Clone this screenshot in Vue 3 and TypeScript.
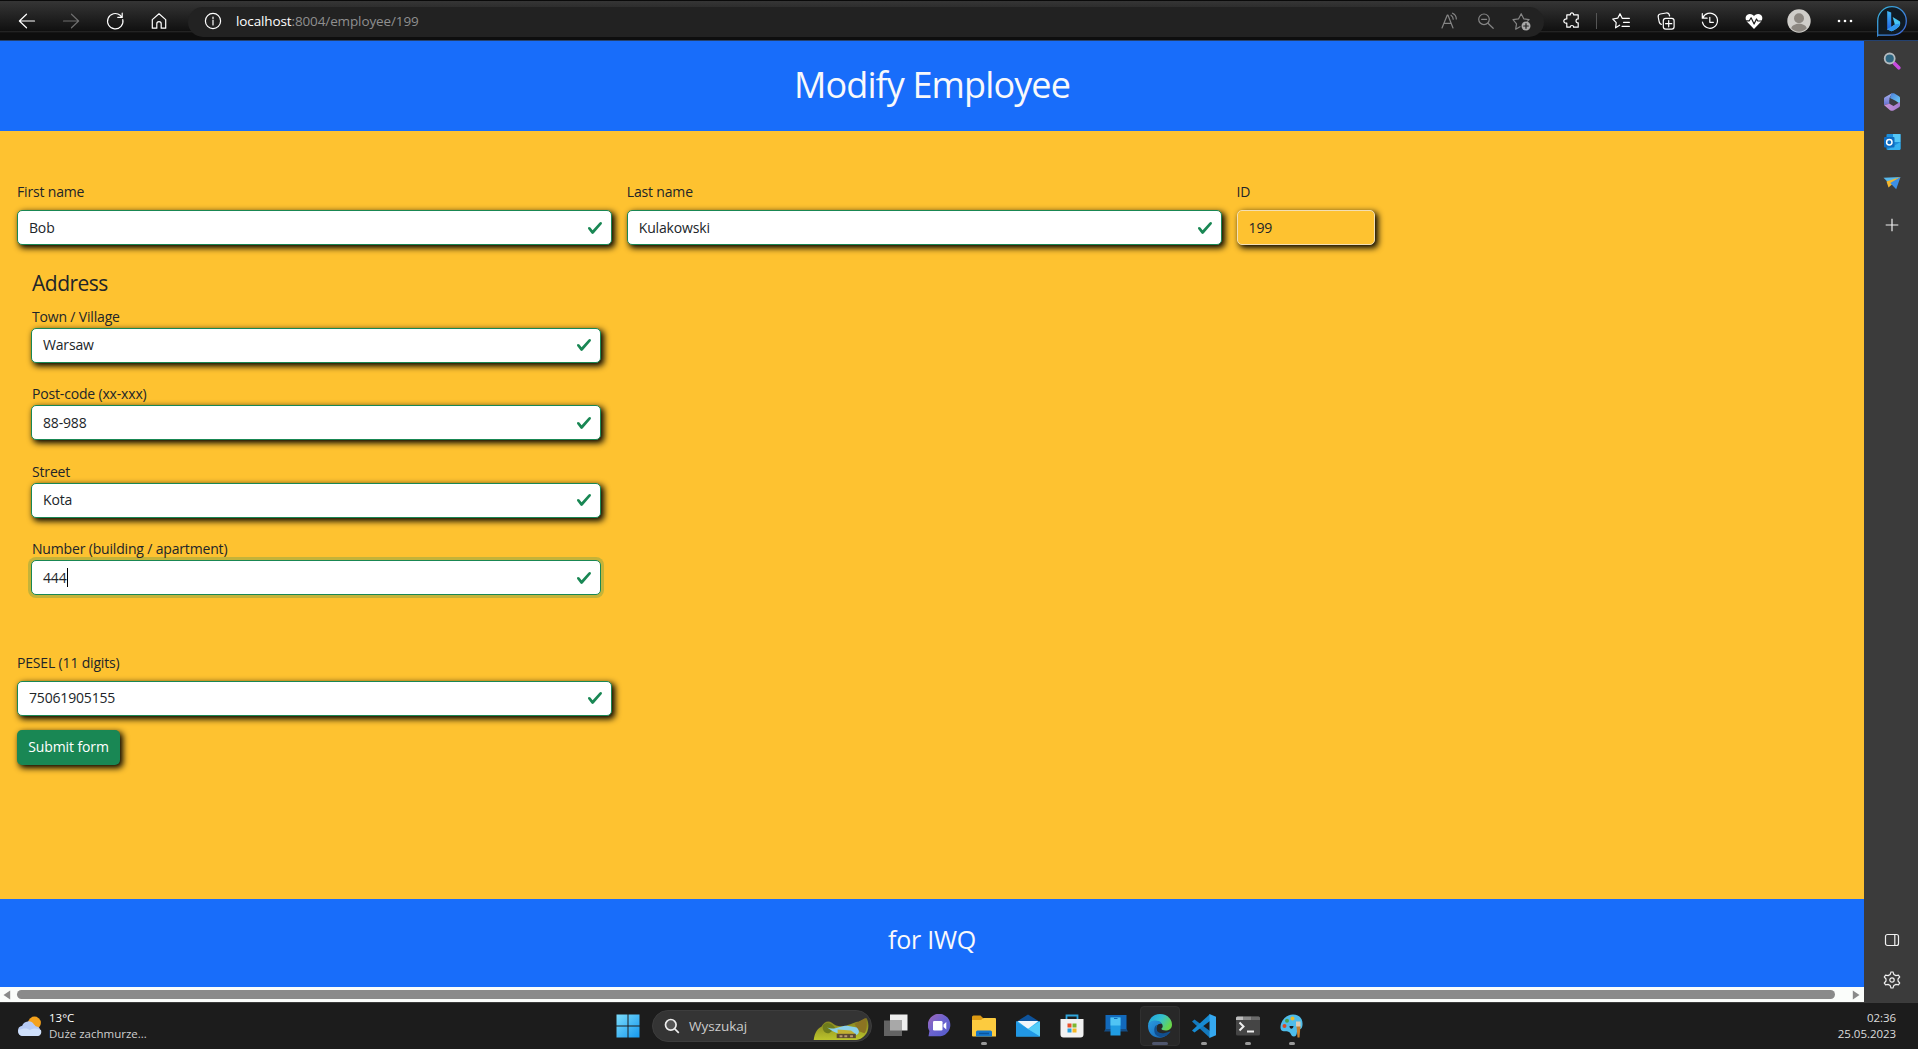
<script setup lang="ts">
interface Field {
  id: string
  label: string
  value: string
  focused?: boolean
}

const names: Field[] = [
  { id: 'first', label: 'First name', value: 'Bob' },
  { id: 'last', label: 'Last name', value: 'Kulakowski' },
]

const address: Field[] = [
  { id: 'town', label: 'Town / Village', value: 'Warsaw' },
  { id: 'post', label: 'Post-code (xx-xxx)', value: '88-988' },
  { id: 'street', label: 'Street', value: 'Kota' },
  { id: 'number', label: 'Number (building / apartment)', value: '444', focused: true },
]
</script>

<template>
  <div class="screen">
    <header class="toolbar">
      <nav class="nav">
        <svg class="ic" viewBox="0 0 20 20"><path d="M17.5 10H2.5M9.5 3.2L2.4 10l7.1 6.8" /></svg>
        <svg class="ic dim" viewBox="0 0 20 20"><path d="M2.5 10h15M10.5 3.2l7.1 6.8-7.1 6.8" /></svg>
        <svg class="ic" viewBox="0 0 20 20"><path d="M17.8 8.6A7.7 7.7 0 1 1 15.2 4.3L16.8 6M17.2 2.2v4.2h-4.4" /></svg>
        <svg class="ic" viewBox="0 0 20 20"><path d="M3.3 8.6L10 2.8l6.7 5.8v8.6h-4.5v-4.400a2.200 2.200 0 0 0-4.400 0v4.400H3.300z" /></svg>
      </nav>
      <div class="omnibox">
        <svg class="ic" viewBox="0 0 20 20"><circle cx="10" cy="10" r="7.6" /><path d="M10 9v5M10 6v1.4" /></svg>
        <span class="url">localhost<em>:8004/employee/199</em></span>
        <div class="omni-tools">
          <svg class="ic grey" viewBox="0 0 20 20"><path d="M2 17L7.3 4h.6L13 17M4 12.4h7.2M11 4.200c1.600 1 2.200 2.400 2.200 4M12.500 2.200c2.600 1.200 3.800 3 3.800 5.800" /></svg>
          <svg class="ic grey" viewBox="0 0 20 20"><circle cx="8" cy="8.3" r="5.3" /><path d="M12 12.3l5.2 5M5.6 8.3h5" /></svg>
          <svg class="ic grey" viewBox="0 0 20 20"><path d="M8 15.700l-4.300 2.500.8-5.400L1 8.700l5.600-.9L9.200 2.700l2.500 5.100 5.400.9-1.500 1.500" /><circle cx="14" cy="15" r="4.500" class="disc" /><path d="M14 12.700v4.600M11.700 15h4.600" class="cut" /></svg>
        </div>
      </div>
      <div class="actions">
        <svg class="ic" viewBox="0 0 20 20"><path d="M4.800 3.800h3.500c-.4-2.600 3.700-2.600 3.300 0h4.600v4.100c-2.900-.5-2.900 4.500 0 4v4.300h-4.600c.4-2.300-3.700-2.300-3.300 0H4.800v-4.200c-4 .8-4-4.500 0-4z" /></svg>
        <i class="bar"></i>
        <svg class="ic" viewBox="0 0 20 20"><path d="M7.600 14.200l-4 2.600.6-5.200L.8 8l4.900-.8L8 2.700l2.200 4.600h7.200M11.500 11.300h5.900M10 15.300h7.400" /></svg>
        <svg class="ic" viewBox="0 0 20 20"><rect x="7.3" y="7.3" width="10.8" height="10.8" rx="2.4" /><path d="M12.700 9.600v6.200M9.600 12.700h6.200M5.300 13.400C4 12.800 3.500 12 3.200 11L2.200 6c-.2-1.600.7-2.700 2-3l6-1c1.800-.2 3 .7 3.400 2.900" /></svg>
        <svg class="ic" viewBox="0 0 20 20"><path d="M2.700 7.200A7.600 7.600 0 1 1 2.400 11M2.300 2.500v4.700h4.800M9.800 6.300v5h3.600" /></svg>
        <svg class="ic" viewBox="0 0 20 20"><path class="fillw" d="M10 18L3 10.700C.2 7.300 2 3 5.800 3 8 3 9.300 4 10 5.200 10.700 4 12 3 14.200 3 18 3 19.800 7.300 17 10.700z" /><path class="pulse" d="M1 9.800h4.300l1.800-3 3 6.200 2.400-5 1.200 2H19" /></svg>
        <svg class="avatar" viewBox="0 0 24 24"><circle cx="12" cy="12" r="11.7" fill="#cfcdc9" /><circle cx="12" cy="9.2" r="5" fill="#8c8781" /><path d="M4.200 19.200c1.400-6 14.200-6 15.600 0-4 4.600-11.600 4.600-15.600 0z" fill="#8c8781" /></svg>
        <svg class="ic" viewBox="0 0 20 20"><g class="fillw"><circle cx="4" cy="10" r="1.3" /><circle cx="10" cy="10" r="1.3" /><circle cx="16" cy="10" r="1.3" /></g></svg>
        <svg class="bing" viewBox="0 0 32 32">
          <defs>
            <linearGradient id="bg1" x1="0" y1="0" x2="1" y2="1"><stop offset="0" stop-color="#39b4d8" /><stop offset="1" stop-color="#3d63d8" /></linearGradient>
            <linearGradient id="bg2" x1="0" y1="0" x2="0" y2="1"><stop offset="0" stop-color="#41b8f5" /><stop offset="1" stop-color="#1f62e6" /></linearGradient>
          </defs>
          <path d="M1.700 30.500V16A14.300 14.300 0 1 1 16 30.200H2z" fill="#101b24" stroke="url(#bg1)" stroke-width="1.3" />
          <path d="M11.200 6l4 1.600v14.200l-4 3.400z" fill="url(#bg2)" />
          <path d="M16.700 12l7.300 4.400c1 4-1 6.400-8.600 9.900l-4.200-1.800 7.600-5z" fill="#48c6f2" />
          <path d="M11.200 24.200l8.400-5 4.200-.8c-.5 3.600-3.800 6-8.400 7.900z" fill="#3096ee" />
        </svg>
      </div>
    </header>

    <div class="middle">
      <main class="page">
        <div class="hero"><h1>Modify Employee</h1></div>
        <form class="form" @submit.prevent>
          <div class="row">
            <div v-for="f in names" :key="f.id" class="field wide">
              <label>{{ f.label }}</label>
              <div class="input"><span>{{ f.value }}</span><svg class="check" viewBox="0 0 8 8"><path d="M2.3 6.73L.6 4.53c-.4-1.04.46-1.4 1.1-.8l1.1 1.4 3.4-3.8c.6-.63 1.6-.27 1.2.7l-4 4.6c-.43.5-.8.4-1.1.1z" /></svg></div>
            </div>
            <div class="field id">
              <label>ID</label>
              <div class="input plain"><span>199</span></div>
            </div>
          </div>
          <section class="address">
            <h4>Address</h4>
            <div v-for="f in address" :key="f.id" class="stack">
              <label>{{ f.label }}</label>
              <div class="input" :class="{ focus: f.focused }"><span>{{ f.value }}</span><i v-if="f.focused" class="caret"></i><svg class="check" viewBox="0 0 8 8"><path d="M2.3 6.73L.6 4.53c-.4-1.04.46-1.4 1.1-.8l1.1 1.4 3.4-3.8c.6-.63 1.6-.27 1.2.7l-4 4.6c-.43.5-.8.4-1.1.1z" /></svg></div>
            </div>
          </section>
          <div class="field wide pesel">
            <label>PESEL (11 digits)</label>
            <div class="input"><span>75061905155</span><svg class="check" viewBox="0 0 8 8"><path d="M2.3 6.73L.6 4.53c-.4-1.04.46-1.4 1.1-.8l1.1 1.4 3.4-3.8c.6-.63 1.6-.27 1.2.7l-4 4.6c-.43.5-.8.4-1.1.1z" /></svg></div>
          </div>
          <button class="submit" type="submit"><span>Submit form</span></button>
        </form>
        <footer class="foot"><h3>for IWQ</h3></footer>
        <div class="scroll">
          <svg class="arrow" viewBox="0 0 8 10"><path d="M7.2.6v8.8L.5 5z" /></svg>
          <div class="thumb"></div>
          <svg class="arrow" viewBox="0 0 8 10"><path d="M.8.6v8.8L7.5 5z" /></svg>
        </div>
      </main>

      <aside class="side">
        <div class="side-top">
          <svg viewBox="0 0 18 18"><path d="M11.5 11.5l4.3 4.3" stroke="#c94be0" stroke-width="3.6" stroke-linecap="round" /><circle cx="6.7" cy="6.5" r="5" fill="#2f6782" stroke="#b5bcc0" stroke-width="1.8" /></svg>
          <svg viewBox="0 0 18 18">
            <defs>
              <linearGradient id="ma" x1="0" y1="0" x2="0" y2="1"><stop offset="0" stop-color="#a9b4f0" /><stop offset="1" stop-color="#6670d0" /></linearGradient>
              <linearGradient id="mb" x1="0" y1="0" x2="1" y2="1"><stop offset="0" stop-color="#4a7fdc" /><stop offset="1" stop-color="#6fd0f5" /></linearGradient>
              <linearGradient id="mc" x1="0" y1="0" x2="1" y2="0"><stop offset="0" stop-color="#c993d6" /><stop offset="1" stop-color="#a27bd0" /></linearGradient>
            </defs>
            <path d="M9 .2L2.200 4C1.300 4.500 1 5 1 6v6l5.500-1.200V5z" fill="url(#ma)" />
            <path d="M8.500.2h2.500L16 3.300c.8.500 1 1 1 1.900v5.500l-4.500-3L7 5z" fill="url(#mb)" />
            <path d="M1 12l5.500-1.200L10.500 13 17 9v3.500c0 .8-.3 1.300-1 1.700l-5 3c-1.300.7-2.700.7-4 0z" fill="url(#mc)" />
            <path d="M6.500 7.200L8 6l4 2.300v2L10 12l-3.500-2z" fill="#3b3b44" />
          </svg>
          <svg viewBox="0 0 18 18"><rect x="3.5" y="1" width="14" height="16" rx="1" fill="#1c8edb" /><path d="M10 1h7.500v8H10z" fill="#55c8f7" /><path d="M4 17l13.500-8v7l-1 1z" fill="#35b1f0" /><rect x="1" y="4" width="10.5" height="10.5" rx="1" fill="#0f6cc0" /><circle cx="6.300" cy="9.200" r="2.700" fill="none" stroke="#fff" stroke-width="1.5" /></svg>
          <svg viewBox="0 0 18 18"><path d="M.5 3.800L17.500 3 5.200 8.600z" fill="#57b9ec" /><path d="M3.500 7.500L17.500 3 5.500 13.500z" fill="#f3b72e" /><path d="M7.200 9L17.500 3l-4.300 12.200z" fill="#3c8fe5" /></svg>
          <svg class="plus" viewBox="0 0 18 18"><path d="M9 2.700v12.600M2.700 9h12.600" /></svg>
        </div>
        <div class="side-bottom">
          <svg class="line" viewBox="0 0 18 18"><rect x="2.5" y="3.5" width="13" height="11" rx="2" /><path d="M11.800 3.500v11" /></svg>
          <svg class="line" viewBox="0 0 18 18"><path d="M7.100 3.500L8 1h2l.9 2.500 2 1.100 2.500-.5 1.300 1.900-1.700 2v2l1.700 2-1.300 1.900-2.500-.5-2 1.100L10 17H8l-.9-2.500-2-1.100-2.500.5L1.300 12 3 10V8L1.300 6l1.300-1.900 2.500.5z" /><circle cx="9" cy="9" r="2.2" /></svg>
        </div>
      </aside>
    </div>

    <footer class="taskbar">
      <div class="weather">
        <svg viewBox="0 0 26 24"><circle cx="17.5" cy="9" r="6.4" fill="#f5a21c" /><path d="M6 22a5.200 5.200 0 0 1-.8-10.300 6.600 6.600 0 0 1 11.800-1.200c1 .8 1.300 1.700 2.600 1.900A5 5 0 0 1 20 22z" fill="#b7cbf5" /><path d="M5 15c4-1 6 0 8 1 3-2 7-2 11 0 1 4-1 6-4 6H6c-4-.3-5-3-4.600-6z" fill="#cfe0fb" /></svg>
        <div class="lines"><b>13°C</b><span>Duże zachmurze...</span></div>
      </div>
      <div class="apps">
        <div class="start"><svg viewBox="0 0 24 24"><defs><linearGradient id="wn" x1="0" y1="0" x2="1" y2="1"><stop offset="0" stop-color="#7bdcfb" /><stop offset="1" stop-color="#1598ef" /></linearGradient></defs><path d="M.5.5h11v11H.5zM12.500.5h11v11h-11zM.5 12.500h11v11H.5zM12.500 12.500h11v11h-11z" fill="url(#wn)" /></svg></div>
        <div class="search">
          <svg class="mag" viewBox="0 0 16 16"><circle cx="6.800" cy="6.800" r="5.300" fill="#555" /><path d="M10.800 10.800l4 4" /></svg>
          <span>Wyszukaj</span>
          <svg class="art" viewBox="0 0 57 24">
            <defs><linearGradient id="hill" x1="0" y1="0" x2="0" y2="1"><stop offset="0" stop-color="#7d7a1e" /><stop offset="1" stop-color="#bcc52c" /></linearGradient></defs>
            <path d="M0 23C1 15 4 11 8 9c3-5 7-7 11-4 4 4 9 4 15 3 7-2 9-4 13-4l8-4c2 3 3 9 1 14-2 5-7 9-14 9z" fill="url(#hill)" />
            <path d="M10 7c5-4 9-1 13 4l-7 5c-5 0-8-4-6-9z" fill="#6e7c1c" />
            <path d="M43 6L54 0c2 5 2 12-1 16l-8-3z" fill="#8c7422" />
            <path d="M14 10c8 3 12-2 21-2l10 2c4 4 2 8-2 8-8 0-6-2-14-2-7 0-9-2-15-6z" fill="#8bd0ea" />
            <path d="M25 12l14 1 5 4H25z" fill="#c2b032" />
            <path d="M24 16.500h20v4.500H24z" fill="#5c4a31" />
            <path d="M27 18h3v2h-3zM32 18h3v2h-3zM38 18h3v2h-3z" fill="#b99a70" />
          </svg>
        </div>
        <div class="app"><svg viewBox="0 0 24 24"><path d="M6 .5h17.500v16H6z" fill="#eee" /><path d="M0 6.500h18v15.500H0z" fill="#636363" /><path d="M6 6.500h12v10H6z" fill="#a8a8a8" /></svg></div>
        <div class="app"><svg viewBox="0 0 24 24"><defs><linearGradient id="ct" x1="0" y1="0" x2="1" y2="1"><stop offset="0" stop-color="#a068b8" /><stop offset=".5" stop-color="#6b63cf" /><stop offset="1" stop-color="#5059c9" /></linearGradient></defs><path d="M.5 22.300l.9-5.300A11.300 11.300 0 1 1 12.500 22.300z" fill="url(#ct)" /><rect x="5" y="7" width="9.5" height="9.5" rx="1.3" fill="#fff" /><path d="M15.500 10.500l2.800-2.500v7.500l-2.800-2.500z" fill="#fff" /></svg></div>
        <div class="app run"><svg viewBox="0 0 24 24"><path d="M0 3a1.500 1.500 0 0 1 1.500-1.500h7L11 4v4H0z" fill="#dd9a13" /><path d="M0 6h9l2.500-2H23a1 1 0 0 1 1 1v17.500H1a1 1 0 0 1-1-1z" fill="#fccb3f" /><path d="M4 22.500V18a1.500 1.500 0 0 1 1.500-1.500h13A1.500 1.500 0 0 1 20 18v4.500z" fill="#1477cb" /><path d="M7 19.500h10" stroke="#0b5499" stroke-width="1.5" /></svg></div>
        <div class="app"><svg viewBox="0 0 24 24"><path d="M0 8l12-7.500L24 8z" fill="#0e539b" /><path d="M0 7.500h24v15H0z" fill="#36b5f1" /><path d="M1.500 7h21L12 15z" fill="#f2f6fb" /><path d="M0 7.500l24 15H1a1 1 0 0 1-1-1z" fill="#2197e4" /><path d="M12 15L24 7.500v14.800z" fill="#55cdf8" /></svg></div>
        <div class="app"><svg viewBox="0 0 24 24"><path d="M6.500 5.500v-4h11v4" fill="none" stroke="#2fa5dc" stroke-width="1.8" /><path d="M.5 5h23v15.500a3 3 0 0 1-3 3h-17a3 3 0 0 1-3-3z" fill="#f1f1f1" /><path d="M7.500 9.500h4v4h-4z" fill="#e8502b" /><path d="M12.500 9.500h4v4h-4z" fill="#7db72f" /><path d="M7.500 14.500h4v4h-4z" fill="#28a0dd" /><path d="M12.500 14.500h4v4h-4z" fill="#f5b723" /></svg></div>
        <div class="app"><svg viewBox="0 0 24 24"><path d="M1.500 1h21v15.500h-21z" fill="#1269bb" /><path d="M0 17.500h24l-1.500-2.500h-21z" fill="#134d85" /><path d="M6.500 3.500h10v18h-10z" fill="#209ce2" /><path d="M6.500 3.500h10v8h-10z" fill="#50c4f4" /><path d="M10 4.500h3.500" stroke="#1269bb" /></svg></div>
        <div class="app active"><svg viewBox="0 0 24 24">
          <defs>
            <linearGradient id="eg" x1="0" y1="0" x2="1" y2=".5"><stop offset="0" stop-color="#1c9fe3" /><stop offset=".55" stop-color="#35c1cd" /><stop offset="1" stop-color="#68d64b" /></linearGradient>
            <linearGradient id="eb" x1="0" y1="0" x2="1" y2="1"><stop offset="0" stop-color="#2a9be0" /><stop offset="1" stop-color="#1462b4" /></linearGradient>
          </defs>
          <path d="M0 11C1 4 6 0 12 0c7 0 12 5 12 10.500 0 4-3 6-6.500 6-2.500 0-4.500-1-4-2 1.500-1 1.500-3 .5-4.500C11 6 3 6 0 11z" fill="url(#eg)" />
          <path d="M0 12c0-3.500 4-6 8-5.500 3 .3 5 1.500 6 3.500-2-1-5 0-5.500 3C7.500 19 13 22 19.500 20.500 15 26 0 25 0 12z" fill="url(#eb)" />
          <path d="M9 11c-3 6 2 11 12.500 6.500.8-.3 1.200.2.700.8C17 25.500 4.500 24.500 6.500 14 7 12 8 11.200 9 11z" fill="#114f8f" />
        </svg></div>
        <div class="app run"><svg viewBox="0 0 24 24"><path d="M0 7.500L2.500 5.500 18 17v7z" fill="#1479bd" /><path d="M0 16.500L2.500 18.500 18 7V0z" fill="#178bd2" /><path d="M17.500 0L24 2.800v18.400L17.500 24z" fill="#35a8f0" /></svg></div>
        <div class="app run"><svg viewBox="0 0 24 24"><rect y="2.5" width="24" height="19" rx="1.5" fill="#454545" /><path d="M0 6V4a1.500 1.500 0 0 1 1.500-1.500H7V6z" fill="#bdbdbd" /><path d="M7 2.500h8.500V6H7z" fill="#8a8a8a" /><path d="M15.500 2.500h7A1.500 1.500 0 0 1 24 4v2h-8.500z" fill="#6b6b6b" /><path d="M3.500 8.500l4 4-4 4M11 17.500h7" fill="none" stroke="#eee" stroke-width="2" /></svg></div>
        <div class="app run"><svg viewBox="0 0 24 24"><path d="M13 .5c7 0 10 5 9.500 10.500-.5 5-3 4-4.500 5-2 1.500 0 6-4 6.500-3 .3-3-3.500-5-4.500-3-1.500-8 1-8.500-4C.3 7 6 .5 13 .5z" fill="#4fbdea" /><path d="M9.500 12c0 4 4 3 4 0z" fill="#1c1c1c" /><circle cx="4.500" cy="12" r="2" fill="#d94b27" /><circle cx="7" cy="6.800" r="2" fill="#4ba34b" /><circle cx="12.500" cy="4.500" r="2" fill="#e9bd2d" /><path d="M16.500 12h4l-1 11.500h-2z" fill="#c58030" /><path d="M16 7.500h4.500v5H16z" fill="#dccbb4" /></svg></div>
      </div>
      <div class="clock"><span>02:36</span><span>25.05.2023</span></div>
    </footer>
  </div>
</template>

<style>
html,
body {
  margin: 0;
  overflow: hidden;
  background: #1c1c1c;
}
</style>

<style scoped>
* {
  box-sizing: border-box;
}
.screen {
  width: 1918px;
  height: 1049px;
  display: flex;
  flex-direction: column;
  font-family: 'Open Sans', 'Noto Sans', sans-serif;
  overflow: hidden;
}
svg {
  display: block;
  flex: none;
}

/* browser toolbar */
.toolbar {
  height: 41px;
  flex: none;
  display: flex;
  align-items: center;
  border-top: 1px solid #0a0a0a;
  border-bottom: 1px solid #24416f;
  background: linear-gradient(#353535 0, #101010 30px, #2a2a2a 30px, #0e0e0e 32px, #0e0e0e 100%);
}
.nav {
  display: flex;
  gap: 24px;
  padding-left: 17px;
  width: 188px;
  flex: none;
}
.ic {
  width: 20px;
  height: 20px;
  fill: none;
  stroke: #fff;
  stroke-width: 1.2;
  stroke-linecap: round;
  stroke-linejoin: round;
}
.ic.dim {
  stroke: #6e6e6e;
}
.ic.grey {
  stroke: #858585;
}
.ic .disc {
  fill: #a8a8a8;
  stroke: none;
}
.ic .cut {
  stroke: #222;
}
.fillw {
  fill: #fff;
  stroke: none;
}
.ic .pulse {
  stroke: #1b1b1b;
}
.omnibox {
  width: 1356px;
  height: 30px;
  margin-top: 2px;
  flex: none;
  display: flex;
  align-items: center;
  padding: 0 12px 1px 15px;
  border-radius: 15px;
  background: #222;
}
.url {
  margin-left: 13px;
  margin-top: -1px;
  font-size: 13.5px;
  letter-spacing: -0.12px;
  line-height: 20px;
  color: #fff;
}
.url em {
  font-style: normal;
  color: #8f8f8f;
}
.omni-tools {
  margin-left: auto;
  display: flex;
  gap: 16px;
}
.actions {
  flex: 1;
  display: flex;
  align-items: center;
  padding-left: 18px;
}
.actions .ic + .ic {
  margin-left: 24px;
}
.bar {
  width: 1px;
  height: 16px;
  margin: 0 15px 0 14px;
  background: #555;
}
.avatar {
  width: 24px;
  height: 24px;
  margin: 0 24px 0 23px;
}
.bing {
  width: 32px;
  height: 32px;
  margin-left: 21px;
}

/* page */
.middle {
  flex: none;
  height: 961px;
  display: flex;
}
.page {
  width: 1864px;
  display: flex;
  flex-direction: column;
  color: #212529;
}
h1,
h3,
h4 {
  margin: 0;
  font-weight: 400;
}
.hero,
.foot {
  flex: none;
  display: flex;
  justify-content: center;
  align-items: center;
  background: #186dfa;
  color: #f8f9fa;
}
.hero {
  height: 90px;
  padding-bottom: 4px;
}
.hero h1 {
  font-size: 36px;
  line-height: 43px;
  letter-spacing: -0.88px;
}
.foot {
  height: 88px;
  padding-bottom: 8px;
}
.foot h3 {
  font-size: 25px;
  line-height: 30px;
  letter-spacing: -0.25px;
}
.form {
  height: 768px;
  flex: none;
  display: flex;
  flex-direction: column;
  align-items: flex-start;
  padding: 50px 0 0 17px;
  background: #fec230;
  font-size: 14px;
  letter-spacing: -0.17px;
  line-height: 22px;
}
.row {
  display: flex;
  gap: 14.8px;
}
.field label {
  display: block;
  height: 29px;
}
.wide {
  width: 595px;
}
.id {
  width: 138px;
}
.input {
  height: 35px;
  display: flex;
  align-items: center;
  padding: 0 8px 0 11px;
  border: 1px solid #198754;
  border-radius: 5px;
  background: #fff;
  box-shadow: 2.5px 2.5px 6px #000;
}
.input.plain {
  background: #fec230;
  border-color: #f3dfb4;
}
.input.focus {
  box-shadow: 0 0 0 3px rgba(25, 135, 84, 0.25);
}
.check {
  width: 16px;
  height: 16px;
  margin-left: auto;
  fill: #198754;
}
.caret {
  width: 1px;
  height: 19px;
  background: #000;
}
.address {
  width: 570px;
  margin: 25px 0 0 14px;
}
.address h4 {
  font-size: 21px;
  line-height: 26px;
  letter-spacing: -0.5px;
  margin-bottom: 9.5px;
  padding-left: 1px;
}
.stack {
  margin-bottom: 20.6px;
}
.stack label {
  display: block;
  height: 22px;
  line-height: 22px;
  padding-left: 1px;
  white-space: nowrap;
}
.pesel {
  margin-top: 36px;
}
.submit {
  width: 103px;
  height: 35px;
  margin-top: 14px;
  padding: 0;
  border: 0;
  border-radius: 5px;
  background: #198754;
  color: #fff;
  font: inherit;
  letter-spacing: -0.1px;
  box-shadow: 2.5px 2.5px 6px #000;
}
.scroll {
  height: 15px;
  display: flex;
  align-items: center;
  padding: 0 4px 0 3px;
  background: #fbfdfb;
}
.arrow {
  width: 8px;
  height: 10px;
  fill: #8a8a8a;
}
.thumb {
  width: 1818px;
  height: 9px;
  margin: 0 auto 0 6px;
  border-radius: 5px;
  background: #8a8a8a;
}

/* edge sidebar */
.side {
  width: 54px;
  display: flex;
  flex-direction: column;
  justify-content: space-between;
  align-items: center;
  padding: 11px 0 13px 1px;
  background: #3b3b3b;
}
.side svg {
  width: 18px;
  height: 18px;
}
.side-top,
.side-bottom {
  display: flex;
  flex-direction: column;
  gap: 22.5px;
}
.side .plus {
  margin-top: 2px;
}
.plus,
.line {
  fill: none;
  stroke: #f0f0f0;
  stroke-width: 1.2;
}

/* windows taskbar */
.taskbar {
  height: 47px;
  flex: none;
  display: flex;
  justify-content: space-between;
  border-top: 1px solid #3c3c3c;
  background: #1c1c1c;
  color: #fff;
  font-size: 11.5px;
  line-height: 16px;
}
.weather {
  width: 606px;
  flex: none;
  display: flex;
  padding: 11px 0 0 17px;
}
.weather svg {
  width: 26px;
  height: 24px;
}
.lines {
  display: flex;
  flex-direction: column;
  margin: -4px 0 0 6px;
}
.lines b {
  font-weight: 400;
}
.lines span {
  color: #cfcfcf;
}
.apps {
  display: flex;
  align-items: flex-start;
  flex: none;
}
.start,
.app {
  width: 44px;
  height: 46px;
  display: flex;
  flex-direction: column;
  align-items: center;
  padding-top: 11px;
}
.start svg,
.app svg {
  width: 24px;
  height: 24px;
}
.run::after,
.active::after {
  content: '';
  width: 6px;
  height: 3px;
  margin-top: 4px;
  border-radius: 2px;
  background: #999;
}
.app.active {
  width: 40px;
  height: 40px;
  margin: 3px 2px 0;
  padding-top: 8px;
  border: 1px solid #303030;
  border-radius: 4px;
  background: #282828;
}
.active svg {
  margin-top: -1px;
}
.active::after {
  width: 16px;
  background: #4f566d;
}
.search {
  width: 220px;
  height: 32px;
  margin: 7px 2px 0;
  display: flex;
  align-items: center;
  padding: 0 2px 0 11px;
  border-radius: 16px;
  border: 1px solid #3d3d3d;
  background: #343434;
}
.mag {
  width: 16px;
  height: 16px;
  fill: none;
  stroke: #eee;
  stroke-width: 1.7;
}
.search span {
  margin: -1px auto 0 9px;
  font-size: 13.5px;
  color: #ccc;
}
.art {
  width: 56px;
  height: 23px;
  margin-top: 6px;
}
.clock {
  flex: 1;
  display: flex;
  flex-direction: column;
  align-items: flex-end;
  padding: 7px 22px 0 0;
  letter-spacing: -0.05px;
  color: #ddd;
}
</style>
